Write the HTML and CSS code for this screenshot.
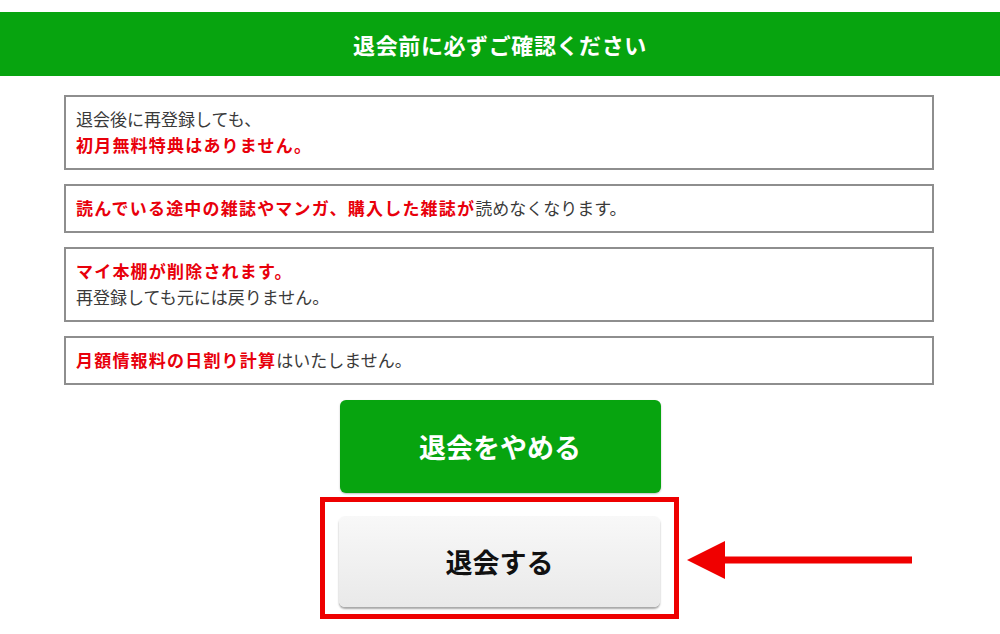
FILE: index.html
```html
<!DOCTYPE html>
<html lang="ja">
<head>
<meta charset="utf-8">
<link rel="stylesheet" href="styles.css">
</head>
<body>
<div class="header">退会前に必ずご確認ください</div>
<div class="notes">
  <div class="note">退会後に再登録しても、<br><b>初月無料特典はありません。</b></div>
  <div class="note"><b>読んでいる途中の雑誌やマンガ、購入した雑誌が</b>読めなくなります。</div>
  <div class="note"><b>マイ本棚が削除されます。</b><br>再登録しても元には戻りません。</div>
  <div class="note"><b>月額情報料の日割り計算</b>はいたしません。</div>
</div>
<div class="actions">
  <div class="btn btn-stay">退会をやめる</div>
  <div class="frame">
    <div class="btn btn-leave">退会する</div>
    <svg class="arrow" width="232" height="44" viewBox="0 0 232 44">
      <polygon points="2,22 40,3 40,41" fill="#f00000"/>
      <rect x="36" y="18.5" width="191" height="7" fill="#f00000"/>
    </svg>
  </div>
</div>
</body>
</html>
```
FILE: styles.css
```css
html, body { margin: 0; padding: 0; background: #fff; }
body {
  font-family: "Noto Sans CJK JP", "Noto Sans", sans-serif;
  color: #333;
}
.header {
  margin-top: 12px;
  height: 64px;
  background: #07a40f;
  color: #fff;
  font-weight: bold;
  font-size: 22px;
  display: flex;
  align-items: center;
  justify-content: center;
  letter-spacing: 0.6px;
}
.notes {
  margin: 19px 66px 0 64px;
  display: flex;
  flex-direction: column;
  gap: 14.5px;
}
.note {
  border: 2px solid #8e8e8e;
  padding: 9px 10px 9.5px 10px;
  font-size: 17px;
  line-height: 26px;
  color: #3a3a3a;
}
.note b { color: #e8000b; font-weight: bold; letter-spacing: 1.2px; }
.actions {
  margin-top: 15px;
  display: flex;
  flex-direction: column;
  align-items: center;
}
.btn {
  width: 321px;
  box-sizing: border-box;
  display: flex;
  align-items: center;
  justify-content: center;
  font-weight: bold;
  font-size: 27px;
  border-radius: 6px;
}
.btn-stay {
  height: 93px;
  background: #07a40f;
  color: #fff;
  box-shadow: 0 1px 2px rgba(0,0,0,0.25);
}
.frame {
  position: relative;
  margin-top: 4px;
  border: 5px solid #ee0000;
  padding: 14px 14px 7px 14px;
  margin-left: -1px;
}
.btn-leave {
  height: 91px;
  background: linear-gradient(#f8f8f8, #e9e9e9);
  color: #111;
  box-shadow: 0 2px 2px rgba(0,0,0,0.35);
}
.arrow {
  position: absolute;
  left: 360px;
  top: 36px;
}
```
